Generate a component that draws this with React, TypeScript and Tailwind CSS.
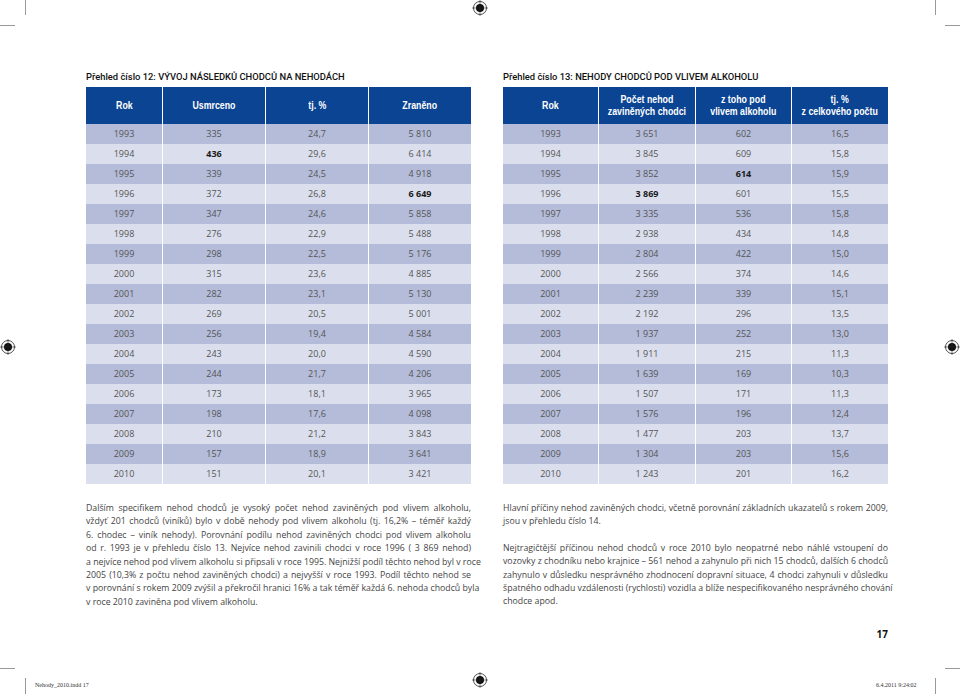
import React from 'react'

type Cell = string | { b: string }

const left: Cell[][] = [
  ['1993', '335', '24,7', '5 810'],
  ['1994', { b: '436' }, '29,6', '6 414'],
  ['1995', '339', '24,5', '4 918'],
  ['1996', '372', '26,8', { b: '6 649' }],
  ['1997', '347', '24,6', '5 858'],
  ['1998', '276', '22,9', '5 488'],
  ['1999', '298', '22,5', '5 176'],
  ['2000', '315', '23,6', '4 885'],
  ['2001', '282', '23,1', '5 130'],
  ['2002', '269', '20,5', '5 001'],
  ['2003', '256', '19,4', '4 584'],
  ['2004', '243', '20,0', '4 590'],
  ['2005', '244', '21,7', '4 206'],
  ['2006', '173', '18,1', '3 965'],
  ['2007', '198', '17,6', '4 098'],
  ['2008', '210', '21,2', '3 843'],
  ['2009', '157', '18,9', '3 641'],
  ['2010', '151', '20,1', '3 421'],
]

const right: Cell[][] = [
  ['1993', '3 651', '602', '16,5'],
  ['1994', '3 845', '609', '15,8'],
  ['1995', '3 852', { b: '614' }, '15,9'],
  ['1996', { b: '3 869' }, '601', '15,5'],
  ['1997', '3 335', '536', '15,8'],
  ['1998', '2 938', '434', '14,8'],
  ['1999', '2 804', '422', '15,0'],
  ['2000', '2 566', '374', '14,6'],
  ['2001', '2 239', '339', '15,1'],
  ['2002', '2 192', '296', '13,5'],
  ['2003', '1 937', '252', '13,0'],
  ['2004', '1 911', '215', '11,3'],
  ['2005', '1 639', '169', '10,3'],
  ['2006', '1 507', '171', '11,3'],
  ['2007', '1 576', '196', '12,4'],
  ['2008', '1 477', '203', '13,7'],
  ['2009', '1 304', '203', '15,6'],
  ['2010', '1 243', '201', '16,2'],
]

// line breaks follow the printed page
const para1 = [
  'Dalším specifikem nehod chodců je vysoký počet nehod zaviněných pod vlivem alkoholu,',
  'vždyť 201 chodců (viníků) bylo v době nehody pod vlivem alkoholu (tj. 16,2% – téměř každý',
  '6. chodec – viník nehody). Porovnání podílu nehod zaviněných chodci pod vlivem alkoholu',
  'od r. 1993 je v přehledu číslo 13. Nejvíce nehod zavinili chodci v roce 1996 ( 3 869 nehod)',
  'a nejvíce nehod pod vlivem alkoholu si připsali v roce 1995. Nejnižší podíl těchto nehod byl v roce',
  '2005 (10,3% z počtu nehod zaviněných chodci) a nejvyšší v roce 1993. Podíl těchto nehod se',
  'v porovnání s rokem 2009 zvýšil a překročil hranici 16% a tak téměř každá 6. nehoda chodců byla',
  'v roce 2010 zaviněna pod vlivem alkoholu.',
]

const para2 = [
  'Hlavní příčiny nehod zaviněných chodci, včetně porovnání základních ukazatelů s rokem 2009,',
  'jsou v přehledu číslo 14.',
]

const para3 = [
  'Nejtragičtější příčinou nehod chodců v roce 2010 bylo neopatrné nebo náhlé vstoupení do',
  'vozovky z chodníku nebo krajnice – 561 nehod a zahynulo při nich 15 chodců, dalších 6 chodců',
  'zahynulo v důsledku nesprávného zhodnocení dopravní situace, 4 chodci zahynuli v důsledku',
  'špatného odhadu vzdálenosti (rychlosti) vozidla a blíže nespecifikovaného nesprávného chování',
  'chodce apod.',
]

function RegMark() {
  return (
    <svg width="16" height="16" viewBox="0 0 16 16">
      <circle cx="8" cy="8" r="6.5" fill="none" stroke="#222" strokeWidth="0.8" />
      <circle cx="8" cy="8" r="4" fill="#111" />
      <line x1="0" y1="8" x2="16" y2="8" stroke="#222" strokeWidth="0.6" />
      <line x1="8" y1="0" x2="8" y2="16" stroke="#222" strokeWidth="0.6" />
    </svg>
  )
}

function Para({ lines, className = '' }: { lines: string[]; className?: string }) {
  return (
    <p className={`text-[8.75px] leading-[13.4px] text-[#444] ${className}`}>
      {lines.map((l, i) => (
        <span
          key={i}
          className={`block whitespace-nowrap ${i < lines.length - 1 ? 'text-justify [text-align-last:justify]' : ''}`}
        >
          {l}
        </span>
      ))}
    </p>
  )
}

function Table({ heads, rows, cols }: { heads: React.ReactNode[]; rows: Cell[][]; cols: string }) {
  return (
    <div className="flex flex-col">
      <div className={`grid ${cols} gap-x-px h-[37px]`}>
        {heads.map((h, i) => (
          <div key={i} className="bg-[#0b4493] flex items-center justify-center text-center">
            {/* narrow bold face: squeeze a regular sans horizontally */}
            <span className="inline-block scale-x-[0.8] whitespace-nowrap font-['Liberation_Sans',sans-serif] font-bold text-[11px] leading-[11.5px] text-white">
              {h}
            </span>
          </div>
        ))}
      </div>
      {rows.map((r, ri) => (
        <div key={ri} className={`grid ${cols} gap-x-px h-[20px]`}>
          {r.map((c, ci) => (
            <div
              key={ci}
              className={`flex items-center justify-center text-[9px] ${ri % 2 === 0 ? 'bg-[#b4bcd9]' : 'bg-[#dbdfed]'}`}
            >
              {typeof c === 'string' ? (
                <span className="text-[#555]">{c}</span>
              ) : (
                <span className="text-[#1a1a1a] font-bold">{c.b}</span>
              )}
            </div>
          ))}
        </div>
      ))}
    </div>
  )
}

const title = "font-['Roboto',sans-serif] text-[9.4px] leading-[14px] font-medium text-[#111] mb-[3px]"

export default function App() {
  return (
    <div className="relative w-[960px] h-[694px] bg-white overflow-hidden font-['Open_Sans',sans-serif]">
      {/* crop marks */}
      <div className="absolute left-[25px] top-0 w-px h-[15px] bg-[#999]" />
      <div className="absolute left-0 top-[25px] w-[15px] h-px bg-[#999]" />
      <div className="absolute left-[935px] top-0 w-px h-[15px] bg-[#999]" />
      <div className="absolute left-[945px] top-[25px] w-[15px] h-px bg-[#999]" />
      <div className="absolute left-0 top-[668px] w-[15px] h-px bg-[#999]" />
      <div className="absolute left-[25px] top-[678px] w-px h-[16px] bg-[#999]" />
      <div className="absolute left-[945px] top-[668px] w-[15px] h-px bg-[#999]" />
      <div className="absolute left-[935px] top-[678px] w-px h-[16px] bg-[#999]" />
      <div className="absolute left-[472px] top-0"><RegMark /></div>
      <div className="absolute left-0 top-[339px]"><RegMark /></div>
      <div className="absolute left-[944px] top-[339px]"><RegMark /></div>
      <div className="absolute left-[472px] top-[672px]"><RegMark /></div>

      <div className="flex gap-[32px] pl-[86px] pt-[70px]">
        {/* left column */}
        <div className="w-[385px] flex flex-col">
          <div className={title}>Přehled číslo 12: VÝVOJ NÁSLEDKŮ CHODCŮ NA NEHODÁCH</div>
          <Table
            cols="grid-cols-[76px_102px_102px_102px]"
            heads={['Rok', 'Usmrceno', 'tj. %', 'Zraněno']}
            rows={left}
          />
          <Para lines={para1} className="mt-[18px]" />
        </div>

        {/* right column */}
        <div className="w-[385px] flex flex-col">
          <div className={title}>Přehled číslo 13: NEHODY CHODCŮ POD VLIVEM ALKOHOLU</div>
          <Table
            cols="grid-cols-[95px_96px_95px_96px]"
            heads={[
              'Rok',
              <>Počet nehod<br />zaviněných chodci</>,
              <>z toho pod<br />vlivem alkoholu</>,
              <>tj. %<br />z celkového počtu</>,
            ]}
            rows={right}
          />
          <Para lines={para2} className="mt-[18px]" />
          <Para lines={para3} className="mt-[13px]" />
          <div className="flex justify-end mt-[18px] text-[10px] font-bold text-[#111]">17</div>
        </div>
      </div>

      {/* slug */}
      <div className="absolute left-[35px] top-[681px] text-[6px] text-[#333] font-['Liberation_Serif',serif]">
        Nehody_2010.indd 17
      </div>
      <div className="absolute left-[876px] top-[681px] text-[6px] text-[#333] font-['Liberation_Serif',serif]">
        6.4.2011 9:24:02
      </div>
    </div>
  )
}
